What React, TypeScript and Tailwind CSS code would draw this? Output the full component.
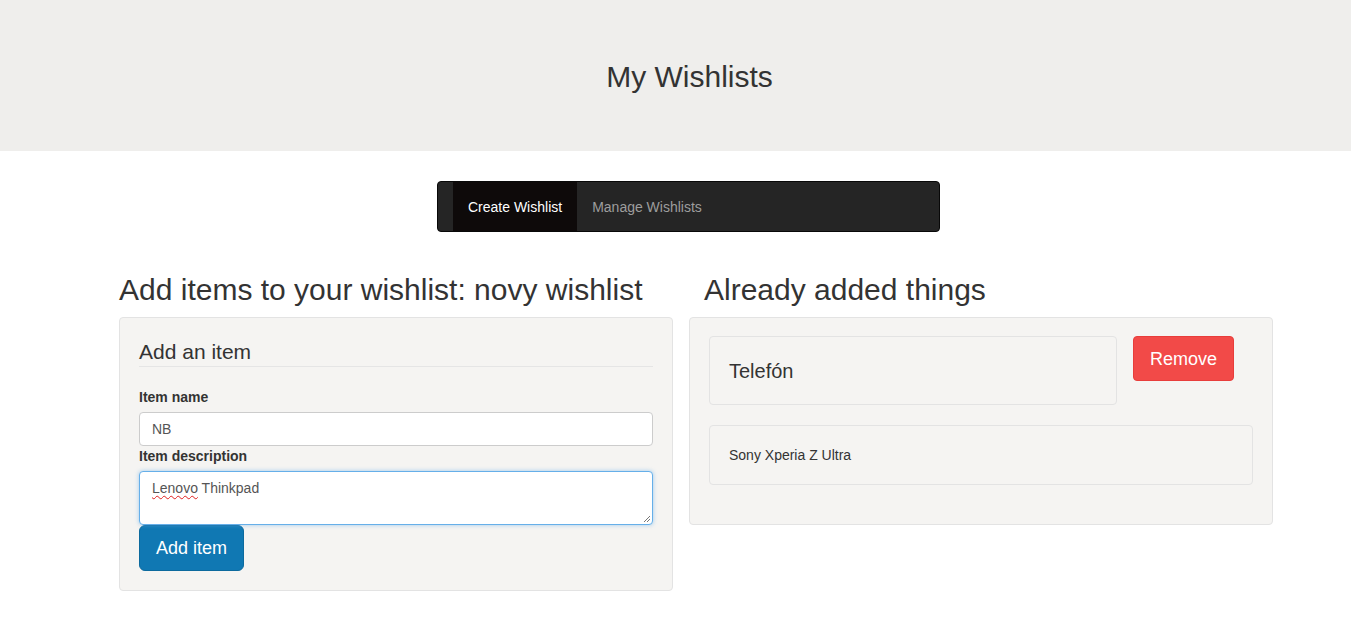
export default function App() {
  return (
    <div className="min-h-screen bg-white text-[#333] font-['Liberation_Sans',Arial,sans-serif]">
      <header className="flex h-[151px] items-center justify-center bg-[#efeeec] pl-[28px] pt-[2px]">
        <h1 className="text-[30px] leading-[33px]">My Wishlists</h1>
      </header>

      <div className="mt-[30px] flex justify-center pl-[26px]">
        <nav className="flex h-[51px] w-[503px] rounded-[4px] border border-[#080808] bg-[#252525] pl-[15px] text-[14px]">
          <a className="flex items-center bg-[#0e0a0a] px-[15px] pt-[1px] text-white">Create Wishlist</a>
          <a className="flex items-center px-[15px] pt-[1px] text-[#9d9d9d]">Manage Wishlists</a>
        </nav>
      </div>

      <main className="ml-[119px] mt-[38px] flex gap-[16px]">
        <section className="w-[554px]">
          <h2 className="mb-[11px] pt-[3px] text-[30px] leading-[33px]">
            Add items to your wishlist: novy wishlist
          </h2>
          <div className="rounded-[4px] border border-[#e3e3e3] bg-[#f5f4f2] px-[19px] pt-[19px] pb-[19px]">
            <div className="mb-[20px] border-b border-[#e5e5e5] text-[21px] leading-[29px]">
              Add an item
            </div>
            <label className="block text-[14px] font-bold leading-[20px] mb-[5px]">Item name</label>
            <input
              defaultValue="NB"
              className="block h-[34px] w-full rounded-[4px] border border-[#ccc] bg-white px-[12px] text-[14px] text-[#555] outline-none"
            />
            <label className="block text-[14px] font-bold leading-[20px] mb-[5px]">
              Item description
            </label>
            <div
              role="textbox"
              className="relative h-[54px] w-full rounded-[4px] border border-[#66afe9] bg-white px-[12px] py-[6px] text-[14px] leading-[20px] text-[#555] shadow-[0_0_4px_rgba(102,175,233,0.6)]"
            >
              <span className="underline decoration-wavy decoration-[#e02020] decoration-1 underline-offset-[2px]">
                Lenovo
              </span>{' '}
              Thinkpad
              <svg className="absolute bottom-[1px] right-[1px]" width="9" height="9" viewBox="0 0 9 9">
                <path d="M8 2 L2 8 M8 5 L5 8" stroke="#777" strokeWidth="1" />
              </svg>
            </div>
            <button className="mt-0 h-[46px] rounded-[6px] border border-[#0c6a9e] bg-[#1078b3] px-[16px] text-[18px] text-white">
              Add item
            </button>
          </div>
        </section>

        <section className="w-[584px]">
          <h2 className="mb-[11px] pt-[3px] pl-[15px] text-[30px] leading-[33px]">Already added things</h2>
          <div className="rounded-[4px] border border-[#e3e3e3] bg-[#f5f4f2] px-[19px] pt-[18px] pb-[39px]">
            <div className="flex items-start gap-[16px]">
              <div className="h-[69px] w-[408px] rounded-[4px] border border-[#e3e3e3] bg-[#f5f4f2] px-[19px] pt-[20px] text-[20px] leading-[29px]">
                Telefón
              </div>
              <button className="h-[45px] w-[101px] rounded-[4px] border border-[#e83d3b] bg-[#f24a48] pt-[1px] text-[18px] text-white">
                Remove
              </button>
            </div>
            <div className="mt-[20px] rounded-[4px] border border-[#e3e3e3] bg-[#f5f4f2] px-[19px] py-[19px] text-[14px] leading-[20px]">
              Sony Xperia Z Ultra
            </div>
          </div>
        </section>
      </main>
    </div>
  );
}
